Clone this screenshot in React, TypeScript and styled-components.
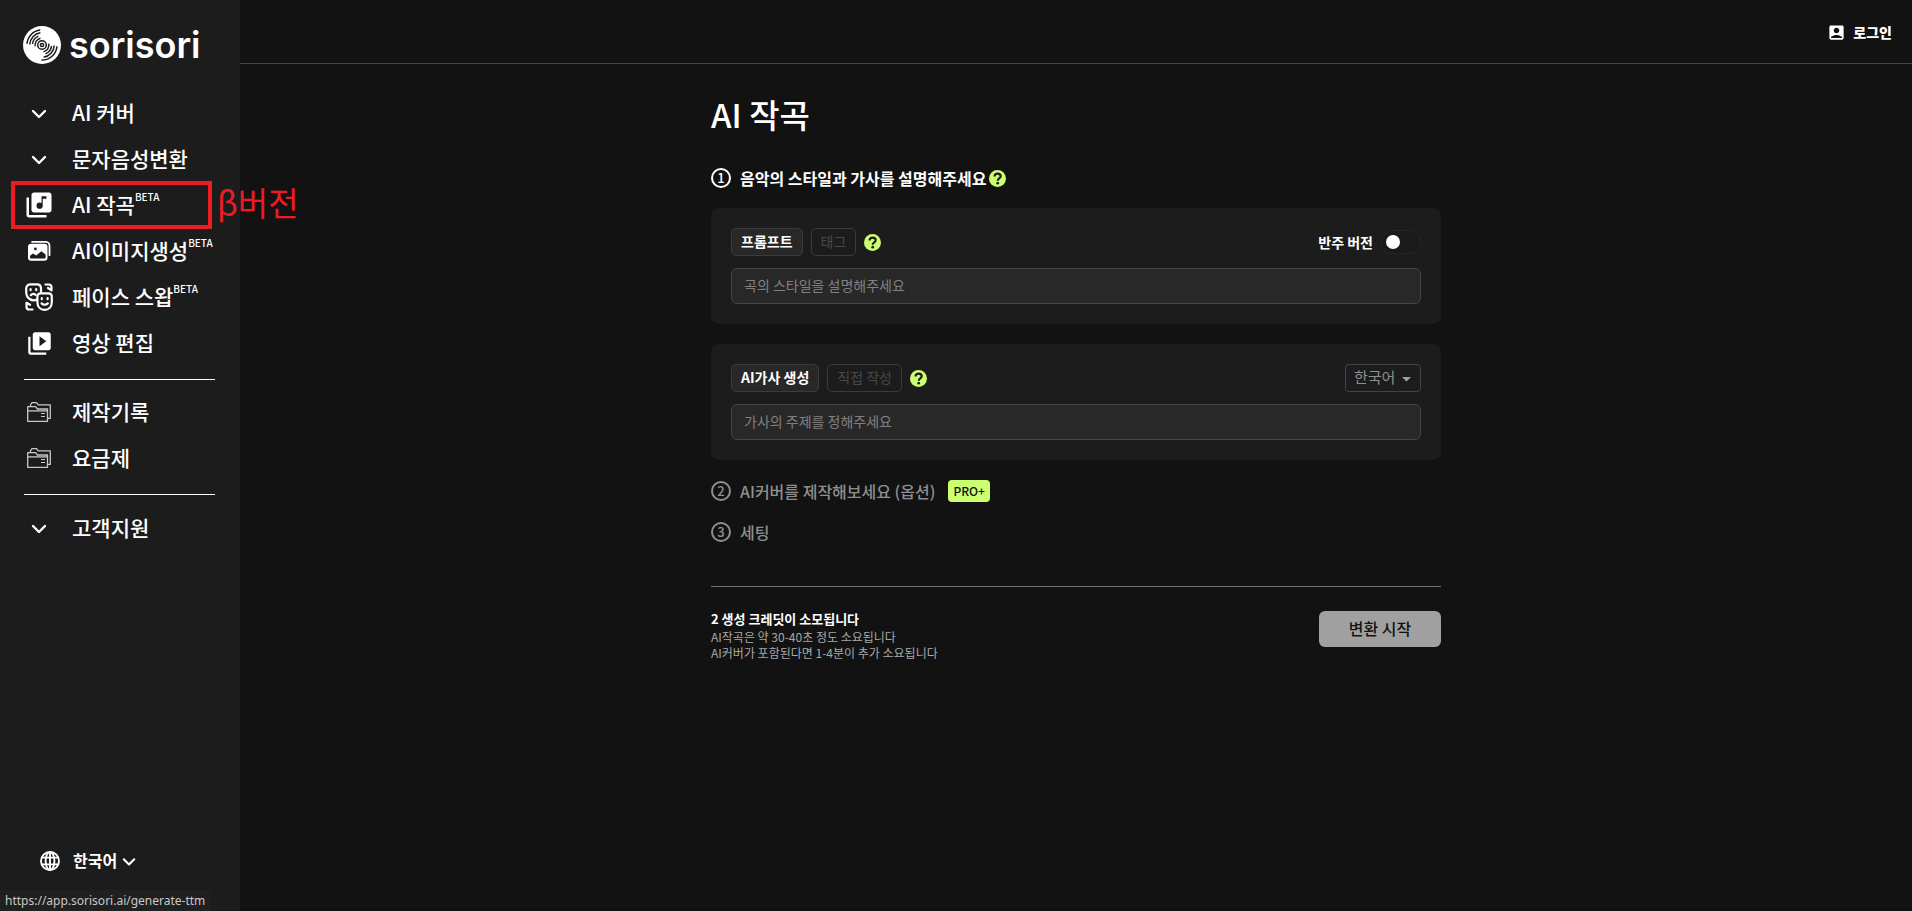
import React from 'react';
import styled, { createGlobalStyle, css } from 'styled-components';
import { MdLibraryMusic, MdVideoLibrary, MdAccountBox } from 'react-icons/md';

const fontStack = `'Noto Sans CJK KR', 'Noto Sans', sans-serif`;

const GlobalStyle = createGlobalStyle`
  * { box-sizing: border-box; }
  body {
    margin: 0;
    background: #121212;
    color: #fff;
    font-family: ${fontStack};
  }
  button, input, select { font-family: inherit; }
`;

/* ---------- page frame ---------- */

const Page = styled.div`
  display: flex;
  min-height: 100vh;
`;

const Sidebar = styled.aside`
  display: flex;
  flex-direction: column;
  flex: none;
  width: 240px;
  padding: 24px 25px 0 24px;
  background: #1c1c1c;
`;

const Main = styled.div`
  flex: 1;
  min-width: 0;
`;

const Header = styled.header`
  display: flex;
  justify-content: flex-end;
  height: 64px;
  padding: 19px 20px 0;
  border-bottom: 1px solid #444;
`;

const LoginLink = styled.a`
  display: flex;
  align-items: center;
  gap: 7px;
  height: 26px;
  color: #fff;
  font-size: 14px;
  font-weight: 900;
  text-decoration: none;
`;

/* ---------- sidebar ---------- */

const Brand = styled.a`
  display: flex;
  align-items: center;
  gap: 8px;
  height: 42px;
  margin: 0 0 24px -1px;
  color: #fff;
  font: 600 36px/40px Inter, 'Liberation Sans', sans-serif;
  text-decoration: none;

  svg { flex: none; }
`;

const Menu = styled.nav`
  display: flex;
  flex-direction: column;
`;

const itemStyle = css`
  position: relative;
  display: flex;
  align-items: center;
  gap: 18px;
  height: 46px;
  padding: 0;
  border: 0;
  background: none;
  color: #fff;
  font-size: 21px;
  font-weight: 500;
  line-height: 30px;
  text-align: left;
  text-decoration: none;
  white-space: nowrap;
  cursor: pointer;
`;

const MenuButton = styled.button`${itemStyle}`;
const MenuLink = styled.a`${itemStyle}`;

const IconSlot = styled.span`
  display: flex;
  align-items: center;
  justify-content: center;
  flex: none;
  width: 30px;
  height: 30px;
`;

const Label = styled.span`
  display: flex;
  padding-bottom: 2px;
`;

const Beta = styled.span`
  font-size: 10px;
  line-height: 16px;
`;

const Rule = styled.hr<{ $color: string; $gap: string }>`
  width: 100%;
  height: 1px;
  margin: ${(p) => p.$gap};
  border: 0;
  background: ${(p) => p.$color};
`;

const Highlight = styled.span`
  position: absolute;
  inset: -1px auto auto -13px;
  width: 201px;
  height: 48px;
  border: 4px solid #ed1c24;
`;

const Note = styled.span`
  position: absolute;
  top: -2px;
  left: 193px;
  color: #ed1c24;
  font-size: 33px;
  font-weight: 400;
  line-height: 44px;
`;

const Language = styled.button`
  display: flex;
  align-items: center;
  height: 30px;
  margin: auto 0 35px;
  padding: 0 0 0 16px;
  border: 0;
  background: none;
  color: #fff;
  font-size: 16px;
  font-weight: 700;

  span { margin: 0 5px 0 13px; padding-bottom: 2px; }
`;

const StatusBar = styled.div`
  position: fixed;
  left: 0;
  bottom: 0;
  height: 21px;
  padding: 0 6px 0 5px;
  border-radius: 0 4px 0 0;
  background: #202020;
  color: #c8c8c8;
  font: 12px/22px 'Noto Sans', sans-serif;
`;

/* ---------- form ---------- */

const Content = styled.main`
  display: flex;
  flex-direction: column;
  max-width: 730px;
  margin: 0 auto;
`;

const Title = styled.h1`
  margin: 26px 0 29px;
  font-size: 33px;
  font-weight: 500;
  line-height: 48px;
`;

const Step = styled.h2<{ $active?: boolean }>`
  display: flex;
  align-items: center;
  gap: 9px;
  height: 22px;
  margin: 0 0 19px;
  color: ${(p) => (p.$active ? '#fff' : '#8f8f8f')};
  font-size: 16px;
  font-weight: ${(p) => (p.$active ? 700 : 500)};
  line-height: 22px;
`;

const StepNumber = styled.span`
  display: flex;
  align-items: center;
  justify-content: center;
  width: 20px;
  height: 20px;
  border: 2px solid currentColor;
  border-radius: 50%;
  font-size: 13px;
  font-weight: 500;
  line-height: 16px;
`;

const StepText = styled.span`
  display: flex;
  align-items: center;
  gap: 3px;
`;

const ProBadge = styled.span`
  height: 22px;
  margin-left: 4px;
  padding: 0 5px;
  border-radius: 4px;
  background: #cbff70;
  color: #111;
  font-size: 12px;
  font-weight: 500;
  line-height: 21px;
`;

const Card = styled.section`
  display: flex;
  flex-direction: column;
  gap: 12px;
  margin-bottom: 20px;
  padding: 20px;
  border-radius: 8px;
  background: #1c1c1c;
`;

const CardRow = styled.div`
  display: flex;
  align-items: center;
  gap: 8px;
  height: 28px;
`;

const Tab = styled.button<{ $active?: boolean }>`
  height: 28px;
  padding: 0 9px 2px;
  border: 1px solid #3b3b3b;
  border-radius: 5px;
  background: ${(p) => (p.$active ? '#282828' : 'transparent')};
  color: ${(p) => (p.$active ? '#fff' : '#484848')};
  font-size: 14px;
  font-weight: ${(p) => (p.$active ? 700 : 400)};
  line-height: 24px;
`;

const HelpButton = styled.button`
  display: flex;
  padding: 0;
  border: 0;
  background: none;
`;

const TextField = styled.input`
  width: 100%;
  height: 36px;
  padding: 0 12px 2px;
  border: 1px solid #444;
  border-radius: 6px;
  background: #282828;
  color: #fff;
  font-size: 14px;

  &::placeholder { color: #808080; opacity: 1; }
`;

const SwitchLabel = styled.label`
  display: flex;
  align-items: center;
  gap: 8px;
  margin-left: auto;
  font-size: 14px;
  font-weight: 700;
`;

const Switch = styled.input`
  appearance: none;
  display: flex;
  align-items: center;
  width: 40px;
  height: 24px;
  margin: 0;
  padding: 0 4px;
  border: 1px solid #262626;
  border-radius: 12px;
  background: #1a1a1a;

  &::before {
    content: '';
    width: 14px;
    height: 14px;
    border-radius: 50%;
    background: #fff;
  }
  &:checked { justify-content: flex-end; }
`;

const SelectWrap = styled.div`
  position: relative;
  margin-left: auto;

  svg {
    position: absolute;
    right: 10px;
    top: 12px;
    pointer-events: none;
  }
`;

const Select = styled.select`
  appearance: none;
  width: 76px;
  height: 28px;
  padding: 0 0 3px 8px;
  border: 1px solid #444;
  border-radius: 4px;
  background: #1c1c1c;
  color: #8f8f8f;
  font-size: 15px;
`;

const Footer = styled.footer`
  display: flex;
  align-items: flex-start;
  justify-content: space-between;
`;

const Notes = styled.div`
  color: #a8a8a8;
  font-size: 12px;
  line-height: 16px;

  strong {
    display: block;
    padding-bottom: 2px;
    color: #fff;
    font-size: 13px;
    line-height: 16px;
  }
  p { margin: 0; }
`;

const StartButton = styled.button`
  width: 122px;
  height: 36px;
  padding: 0 0 2px;
  border: 0;
  border-radius: 6px;
  background: #a0a0a0;
  color: #121212;
  font-size: 16px;
  font-weight: 500;
`;

/* ---------- icons ---------- */

const Disc = () => (
  <svg width="38" height="38" viewBox="0 0 38 38" fill="none" stroke="#1c1c1c" strokeWidth="1.5" aria-hidden="true">
    <circle cx="19" cy="19" r="19" fill="#fff" stroke="none" />
    <circle cx="19" cy="19" r="1.6" />
    <circle cx="19" cy="19" r="4.3" />
    <path d="M12.2 20.3A7 7 0 0 1 17.5 12.2M25.8 17.7A7 7 0 0 1 20.5 25.8" />
    <path d="M9.5 18A9.6 9.6 0 0 1 15.5 10.1M28.5 20A9.6 9.6 0 0 1 22.5 27.9" />
    <path d="M6.8 18.5A12.3 12.3 0 0 1 17.4 6.8M31.2 19.5A12.3 12.3 0 0 1 20.6 31.2" />
    <path d="M4 17.8A15 15 0 0 1 17.3 4.1M34 20.2A15 15 0 0 1 18.5 34" />
  </svg>
);

const Chevron = ({ size = 16 }: { size?: number }) => (
  <svg width={size} height={size} viewBox="0 0 16 16" fill="none" stroke="currentColor" strokeWidth="2.4" strokeLinecap="round" strokeLinejoin="round" aria-hidden="true">
    <path d="M2 6 8 12 14 6" />
  </svg>
);

const Photos = () => (
  <svg width="24" height="22" viewBox="0 0 24 22" aria-hidden="true">
    <path d="M5 1.8h13.5a4 4 0 0 1 4 4v9.4" fill="none" stroke="#fff" strokeWidth="1.8" strokeLinecap="round" />
    <rect x="1" y="3.8" width="19.5" height="17" rx="3.2" fill="#fff" />
    <circle cx="8.4" cy="8.9" r="1.4" fill="#1c1c1c" />
    <path d="M3 15.8 6 13.6 9.2 15.4 14.4 11.2 18.6 14.4V17.4Q18.6 18.6 17.4 18.6H4.2Q3 18.6 3 17.4Z" fill="#1c1c1c" />
  </svg>
);

const FaceSwap = () => (
  <svg width="28" height="28" viewBox="0 0 28 28" fill="none" stroke="#fff" strokeWidth="2.2" strokeLinecap="round" strokeLinejoin="round" aria-hidden="true">
    <path d="M11.5 16.7C7 18.5 1.2 15.5 1.2 9V5.5C1.2 3 3 1.3 5.4 1.3H12C14.4 1.3 16 3 16 5.5V9" />
    <path d="M12.4 13.5c0-2 1.5-3.2 3.2-3.2h7.8c2 0 3.4 1.4 3.4 3.4v5.2c0 5-3.2 8-7.2 8s-7.2-3-7.2-8Z" />
    <path d="M5.6 6.2v1M11.2 6.2v1M5.8 12.2c1.4-1.6 3.4-1.6 4.8-.4M16.8 15.2v1M22.6 15.2v1M16.6 20.4c1.8 1.8 4.4 1.8 6.2 0" />
    <path d="M20.5 1.5h3.2c1.6 0 2.8 1.2 2.8 2.8v3M26.5 7.3 23 5M1.5 19.8v3.9c0 1.6 1.2 2.8 2.8 2.8H7.5M5 21.8 1.5 19.8" />
  </svg>
);

const Folders = () => (
  <svg width="24" height="20" viewBox="0 0 24 20" fill="none" stroke="#c8c8c8" strokeWidth="1.3" strokeLinejoin="round" aria-hidden="true">
    <path d="M.7 19.3V4.7H8.6L10.4 7H20.5V19.3Z" />
    <path d="M.7 8.9H20.5" />
    <path d="M14 11.5h4M14 14.5h4" strokeWidth="1" />
    <path d="M3.4 4.7V3L5 .7H9.6L11.3 2.8H23.3V16.4H20.5" />
  </svg>
);

const Globe = () => (
  <svg width="20" height="20" viewBox="0 0 20 20" fill="none" stroke="currentColor" strokeWidth="1.9" aria-hidden="true">
    <circle cx="10" cy="10" r="9" />
    <ellipse cx="10" cy="10" rx="4.4" ry="9" />
    <path d="M10 1v18M1.8 6.6h16.4M1.8 13.4h16.4" />
  </svg>
);

const Help = () => (
  <HelpButton type="button" aria-label="도움말">
    <svg width="17" height="17" viewBox="0 0 17 17" aria-hidden="true">
      <circle cx="8.5" cy="8.5" r="8.5" fill="#cbff70" />
      <path d="M5.5 6.6C5.5 4.6 6.9 3.6 8.6 3.6S11.7 4.7 11.7 6.3C11.7 8.4 8.7 8.4 8.7 10.8" fill="none" stroke="#1a1a1a" strokeWidth="2.1" />
      <circle cx="8.7" cy="13.2" r="1.35" fill="#1a1a1a" />
    </svg>
  </HelpButton>
);

/* ---------- page ---------- */

type LinkItemProps = { icon: React.ReactNode; text: string; beta?: boolean; children?: React.ReactNode };

const LinkItem = ({ icon, text, beta, children }: LinkItemProps) => (
  <MenuLink href="#">
    <IconSlot>{icon}</IconSlot>
    <Label>
      {text}
      {beta && <Beta>BETA</Beta>}
    </Label>
    {children}
  </MenuLink>
);

const GroupItem = ({ text }: { text: string }) => (
  <MenuButton type="button">
    <IconSlot><Chevron /></IconSlot>
    <Label>{text}</Label>
  </MenuButton>
);

export default function App() {
  return (
    <Page>
      <GlobalStyle />
      <Sidebar>
        <Brand href="#">
          <Disc />
          sorisori
        </Brand>
        <Menu>
          <GroupItem text="AI 커버" />
          <GroupItem text="문자음성변환" />
          <LinkItem icon={<MdLibraryMusic size={30} />} text="AI 작곡" beta>
            <Highlight />
            <Note>β버전</Note>
          </LinkItem>
          <LinkItem icon={<Photos />} text="AI이미지생성" beta />
          <LinkItem icon={<FaceSwap />} text="페이스 스왑" beta />
          <LinkItem icon={<MdVideoLibrary size={27} />} text="영상 편집" />
          <Rule $color="#fff" $gap="13px 0 9px" />
          <LinkItem icon={<Folders />} text="제작기록" />
          <LinkItem icon={<Folders />} text="요금제" />
          <Rule $color="#fff" $gap="13px 0 10px" />
          <GroupItem text="고객지원" />
        </Menu>
        <Language type="button">
          <Globe />
          <span>한국어</span>
          <Chevron size={14} />
        </Language>
      </Sidebar>
      <Main>
        <Header>
          <LoginLink href="#">
            <MdAccountBox size={19} />
            로그인
          </LoginLink>
        </Header>
        <Content>
          <Title>AI 작곡</Title>
          <Step $active>
            <StepNumber>1</StepNumber>
            <StepText>음악의 스타일과 가사를 설명해주세요 <Help /></StepText>
          </Step>
          <Card>
            <CardRow>
              <Tab type="button" $active>프롬프트</Tab>
              <Tab type="button">태그</Tab>
              <Help />
              <SwitchLabel>
                반주 버전
                <Switch type="checkbox" role="switch" />
              </SwitchLabel>
            </CardRow>
            <TextField aria-label="곡의 스타일" placeholder="곡의 스타일을 설명해주세요" />
          </Card>
          <Card>
            <CardRow>
              <Tab type="button" $active>AI가사 생성</Tab>
              <Tab type="button">직접 작성</Tab>
              <Help />
              <SelectWrap>
                <Select aria-label="가사 언어" defaultValue="ko">
                  <option value="ko">한국어</option>
                </Select>
                <svg width="9" height="6" viewBox="0 0 9 6" aria-hidden="true">
                  <path d="M0 1h9L4.5 5.5Z" fill="#a0a0a0" />
                </svg>
              </SelectWrap>
            </CardRow>
            <TextField aria-label="가사의 주제" placeholder="가사의 주제를 정해주세요" />
          </Card>
          <Step>
            <StepNumber>2</StepNumber>
            AI커버를 제작해보세요 (옵션)
            <ProBadge>PRO+</ProBadge>
          </Step>
          <Step>
            <StepNumber>3</StepNumber>
            세팅
          </Step>
          <Rule $color="#6e6e6e" $gap="24px 0 24px" />
          <Footer>
            <Notes>
              <strong>2 생성 크레딧이 소모됩니다</strong>
              <p>AI작곡은 약 30-40초 정도 소요됩니다</p>
              <p>AI커버가 포함된다면 1-4분이 추가 소요됩니다</p>
            </Notes>
            <StartButton type="button">변환 시작</StartButton>
          </Footer>
        </Content>
      </Main>
      <StatusBar>https://app.sorisori.ai/generate-ttm</StatusBar>
    </Page>
  );
}
